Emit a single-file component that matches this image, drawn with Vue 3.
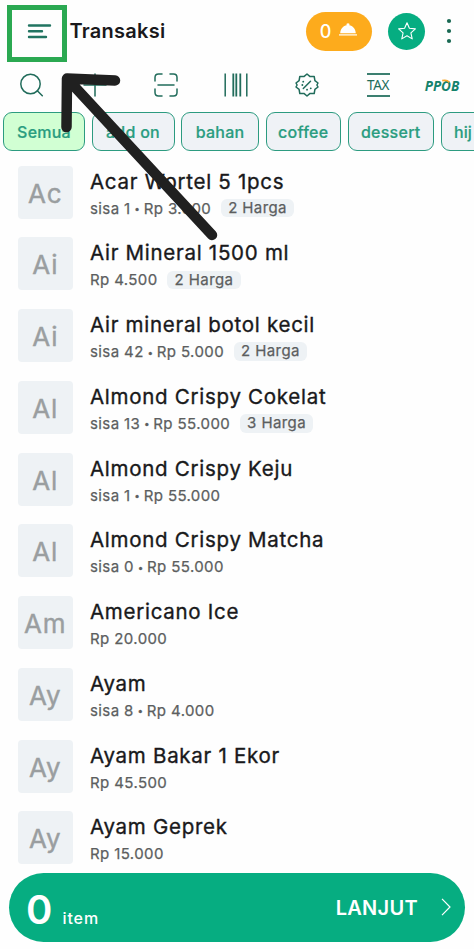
<script setup>
const categories = [
  { label: 'Semua', width: 82, active: true },
  { label: 'add on', width: 83 },
  { label: 'bahan', width: 78 },
  { label: 'coffee', width: 75.5 },
  { label: 'dessert', width: 86.5 },
  { label: 'hij', width: 76, clipped: true },
]
const products = [
  { code: 'Ac', name: 'Acar Wortel 5 1pcs', info: ['sisa 1', 'Rp 3.000'], prices: 2 },
  { code: 'Ai', name: 'Air Mineral 1500 ml', info: ['Rp 4.500'], prices: 2 },
  { code: 'Ai', name: 'Air mineral botol kecil', info: ['sisa 42', 'Rp 5.000'], prices: 2 },
  { code: 'Al', name: 'Almond Crispy Cokelat', info: ['sisa 13', 'Rp 55.000'], prices: 3 },
  { code: 'Al', name: 'Almond Crispy Keju', info: ['sisa 1', 'Rp 55.000'] },
  { code: 'Al', name: 'Almond Crispy Matcha', info: ['sisa 0', 'Rp 55.000'] },
  { code: 'Am', name: 'Americano Ice', info: ['Rp 20.000'] },
  { code: 'Ay', name: 'Ayam', info: ['sisa 8', 'Rp 4.000'] },
  { code: 'Ay', name: 'Ayam Bakar 1 Ekor', info: ['Rp 45.500'] },
  { code: 'Ay', name: 'Ayam Geprek', info: ['Rp 15.000'] },
]
</script>

<template>
  <div class="screen">
    <header class="header">
      <svg class="menu" viewBox="0 0 24 16"><path d="M3 2.500H24M3 8.300H16M3 14H20" /></svg>
      <h1>Transaksi</h1>
      <div class="orders">
        <span>0</span>
        <svg viewBox="0 0 18 14"><path d="M1.200 10.200C1.500 5.500 4.400 2.700 7.700 2.200a1.400 1.400 0 1 1 2.600 0c3.300.5 6.200 3.300 6.500 8z" /><path d="M0 11.300h18v1.200H0z" /></svg>
      </div>
      <div class="favorite">
        <svg viewBox="0 0 20 20"><path d="M10 1.700l2.400 5.600 6 .6-4.500 4 1.300 6L10 14.800 4.800 17.900l1.300-6-4.500-4 6-.6z" /></svg>
      </div>
      <svg class="more" viewBox="0 0 6 26"><circle cx="3" cy="3" r="2.100" /><circle cx="3" cy="13" r="2.100" /><circle cx="3" cy="23" r="2.100" /></svg>
    </header>

    <nav class="tools">
      <svg viewBox="0 0 24 24"><circle cx="10.500" cy="11" r="9.700" /><path d="M17.300 17.800l5 5" /></svg>
      <svg viewBox="0 0 24 24"><path d="M12 1v22M1 12h22" /></svg>
      <svg viewBox="0 0 24 24"><path d="M1 8V4.500Q1 1 4.500 1H8M16 1h3.500Q23 1 23 4.500V8M23 16v3.500q0 3.500-3.500 3.500H16M8 23H4.500Q1 23 1 19.500V16M4 12h16" /></svg>
      <svg viewBox="0 0 24 24" class="bars"><path d="M1.200 .5v23M22.800 .5v23" /><path class="thick" d="M9.300 .5v23M12.300 .5v23M16.300 .5v23" /></svg>
      <svg viewBox="0 0 24 24"><path d="M12 1l3.100 2.600 4.100-.1.700 4.100L23 10l-1.100 2 1.100 2-3.100 2.400-.7 4.100-4.100-.1L12 23l-3.100-2.600-4.100.1-.7-4.100L1 14l1.100-2L1 10l3.100-2.400.7-4.100 4.100.1zM8.300 15.500l7.200-7.200" /><path class="dots" d="M8.200 8.700h.1M15.700 15.300h.1M7.300 12h.1M12 16.700h.1" /></svg>
      <div class="tax">TAX</div>
      <div class="ppob">PP<span>O<svg viewBox="0 0 12 6"><path d="M1.500 2Q7 .3 10.500 4" /></svg></span>B</div>
    </nav>

    <div class="chips">
      <span v-for="c in categories" :key="c.label" class="chip" :class="{ active: c.active, clipped: c.clipped }" :style="{ width: c.width + 'px' }">{{ c.label }}</span>
    </div>

    <main class="list">
      <div v-for="p in products" :key="p.name" class="row">
        <div class="thumb">{{ p.code }}</div>
        <div class="body">
          <div class="name">{{ p.name }}</div>
          <div class="meta">
            <template v-for="(part, i) in p.info" :key="part">
              <span v-if="i" class="dot">•</span>
              <span>{{ part }}</span>
            </template>
            <span v-if="p.prices" class="badge">{{ p.prices }} Harga</span>
          </div>
        </div>
      </div>
    </main>

    <footer class="cart">
      <span class="count">0</span>
      <span class="unit">item</span>
      <span class="next">LANJUT</span>
      <svg viewBox="0 0 10 18"><path d="M1 .8l8 8.200-8 8.200" /></svg>
    </footer>

    <div class="highlight"></div>
    <svg class="pointer" viewBox="0 0 170 180"><path d="M65 20.500L17 18.500l-.5 48.500M17 18.500L162 175" /></svg>
  </div>
</template>

<style>
body { margin: 0; background: #fff; }
</style>

<style scoped>
.screen {
  position: relative;
  box-sizing: border-box;
  width: 474px;
  height: 949px;
  overflow: hidden;
  display: flex;
  flex-direction: column;
  background: #fefefe;
  font-family: Inter, "Noto Sans", sans-serif;
  font-weight: 500;
  color: #19191b;
}
svg { display: block; flex: none; overflow: visible; fill: none; }
.header { display: flex; align-items: center; height: 62px; padding-left: 25.500px; flex: none; }
.menu { width: 24px; height: 16px; stroke: #217461; stroke-width: 2.400; stroke-linecap: round; }
h1 { margin: 0 auto 0 20px; font-size: 20px; font-weight: 600; letter-spacing: .25px; line-height: 24px; }
.orders { display: flex; align-items: center; justify-content: center; gap: 8px; width: 66px; height: 39px; border-radius: 20px; background: #fdab1c; color: #fff; font-size: 18px; font-weight: 500; }
.orders svg { width: 18px; height: 14px; fill: #fff; margin-top: -2px; }
.favorite { display: grid; place-items: center; width: 37px; height: 37px; margin: 0 21px 0 16.500px; border-radius: 50%; background: #06ad81; }
.favorite svg { width: 20px; height: 20px; stroke: #fff; stroke-width: 1.100; stroke-linejoin: round; }
.more { width: 6px; height: 26px; margin-right: 22px; fill: #196953; }
.tools { display: grid; grid-template-columns: 63px 64px 77px 64px 78px 64px 64px; justify-items: center; align-items: center; height: 46px; flex: none; }
.tools > svg { width: 24px; height: 24px; stroke: #216c5b; stroke-width: 1.500; stroke-linecap: round; stroke-linejoin: round; }
.tools .bars { stroke-linecap: butt; }
.tools .thick { stroke-width: 1.800; }
.tools .dots { stroke-width: 1.800; }
.tax { box-sizing: border-box; width: 23px; height: 24px; display: flex; align-items: center; justify-content: center; border-top: 2px solid #3c7f70; border-bottom: 2px solid #3c7f70; font: 400 13.500px "Noto Sans", sans-serif; letter-spacing: -.3px; color: #216c5b; }
.ppob { display: flex; font: italic 700 14px "Open Sans", sans-serif; color: #14826b; transform: scaleX(.96); }
.ppob span { position: relative; }
.ppob svg { position: absolute; left: 0; top: 3px; width: 10px; height: 5px; stroke: #f5a72c; stroke-width: 2; }
.chips { display: flex; gap: 6.500px; padding: 4px 0 0 3px; flex: none; }
.chip { box-sizing: border-box; flex: none; height: 39px; border: 1.200px solid #2c9b80; border-radius: 9px; background: #eff2f6; color: #2a9d80; font-size: 16px; font-weight: 500; line-height: 38px; text-align: center; letter-spacing: .25px; -webkit-text-stroke: .2px currentColor; }
.chip.active { background: #d1ffd3; }
.chip.clipped { text-align: left; padding-left: 12.500px; letter-spacing: 0; }
.list { display: grid; grid-auto-rows: 71.750px; padding: 14.500px 0 0 18px; }
.row { display: flex; gap: 17.500px; }
.thumb { flex: none; width: 54.500px; height: 53px; border-radius: 4px; background: #eef2f5; color: #9a9ea0; font-size: 26px; font-weight: 400; line-height: 56px; text-align: center; letter-spacing: .8px; -webkit-text-stroke: .4px currentColor; }
.name { height: 31px; font-size: 20.500px; font-weight: 400; line-height: 31px; letter-spacing: .72px; white-space: nowrap; -webkit-text-stroke: .35px currentColor; }
.meta { display: flex; align-items: center; height: 23px; font-size: 15px; font-weight: 400; color: #5c5e60; letter-spacing: .4px; white-space: nowrap; -webkit-text-stroke: .25px currentColor; }
.dot { width: 13px; font-size: 10px; text-align: center; letter-spacing: 0; }
.badge { height: 18.500px; margin-left: 9.500px; padding: 0 7.500px; border-radius: 6px; background: #eef2f5; line-height: 18.500px; }
.cart { position: absolute; left: 9px; bottom: 7.500px; box-sizing: border-box; width: 456px; height: 68.500px; padding: 0 14px 0 17px; border-radius: 35px; display: flex; align-items: baseline; background: #06ad81; color: #fff; }
.count { font-size: 40px; line-height: 74px; width: 36.500px; font-weight: 600; }
.unit { font-size: 16px; letter-spacing: .9px; }
.next { margin-left: auto; margin-right: 23px; padding-top: 2px; font-size: 20px; font-weight: 600; letter-spacing: .3px; align-self: center; }
.cart svg { width: 10px; height: 18px; align-self: center; stroke: #fff; stroke-width: 1.200; }
.highlight { position: absolute; left: 7px; top: 4.500px; box-sizing: border-box; width: 60px; height: 57px; border: 5px solid #2ba952; }
.pointer { position: absolute; left: 50px; top: 60px; width: 170px; height: 180px; stroke: #202020; stroke-width: 10.500; stroke-linecap: round; stroke-linejoin: round; }
</style>
